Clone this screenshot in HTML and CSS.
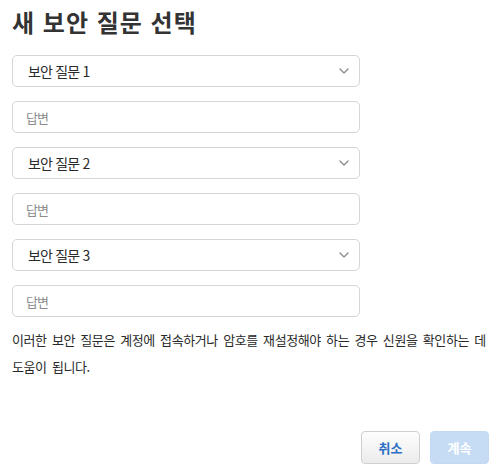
FILE: index.html
```html
<!DOCTYPE html>
<html lang="ko">
<head>
    <meta charset="UTF-8">
    <title>새 보안 질문 선택</title>
    <link rel="stylesheet" href="styles.css">
</head>
<body>
    <h1 class="title">새 보안 질문 선택</h1>

    <form class="question-form">
        <div class="select-box">
            <span>보안 질문 1</span>
            <svg class="chevron" width="10" height="6" viewBox="0 0 10 6"><path d="M1 1 L5 5 L9 1" fill="none" stroke="#8a8a8a" stroke-width="1.3" stroke-linecap="round" stroke-linejoin="round"/></svg>
        </div>
        <input class="answer" type="text" placeholder="답변">

        <div class="select-box">
            <span>보안 질문 2</span>
            <svg class="chevron" width="10" height="6" viewBox="0 0 10 6"><path d="M1 1 L5 5 L9 1" fill="none" stroke="#8a8a8a" stroke-width="1.3" stroke-linecap="round" stroke-linejoin="round"/></svg>
        </div>
        <input class="answer" type="text" placeholder="답변">

        <div class="select-box">
            <span>보안 질문 3</span>
            <svg class="chevron" width="10" height="6" viewBox="0 0 10 6"><path d="M1 1 L5 5 L9 1" fill="none" stroke="#8a8a8a" stroke-width="1.3" stroke-linecap="round" stroke-linejoin="round"/></svg>
        </div>
        <input class="answer" type="text" placeholder="답변">
    </form>

    <p class="note">이러한 보안 질문은 계정에 접속하거나 암호를 재설정해야 하는 경우 신원을 확인하는 데 도움이 됩니다.</p>

    <div class="actions">
        <button class="btn btn-cancel">취소</button>
        <button class="btn btn-next" disabled>계속</button>
    </div>
</body>
</html>
```

FILE: styles.css
```css
body {
    margin: 0;
    padding: 6px 12px 0;
    font-family: "Noto Sans CJK KR", "Noto Sans", sans-serif;
    color: #333;
    background: #fff;
}

.title {
    margin: 0 0 17px;
    font-size: 24px;
    line-height: 32px;
    font-weight: bold;
    letter-spacing: 1px;
    color: #333;
}

.question-form {
    display: flex;
    flex-direction: column;
    gap: 14px;
    width: 348px;
}

.select-box,
.answer {
    box-sizing: border-box;
    height: 32px;
    border: 1px solid #d6d6d6;
    border-radius: 5px;
    background: #fff;
}

.select-box {
    display: flex;
    align-items: center;
    justify-content: space-between;
    padding: 0 10px 0 15px;
    font-size: 14px;
    letter-spacing: -0.8px;
    color: #2a2a2a;
}

.answer {
    width: 100%;
    padding: 0 13px;
    font-family: inherit;
    font-size: 13px;
    letter-spacing: -1px;
    outline: none;
}

.answer::placeholder {
    color: #8c8c8c;
}

.note {
    margin: 9px 0 0;
    width: 484px;
    font-size: 13px;
    letter-spacing: -0.4px;
    word-spacing: 2px;
    word-break: keep-all;
    line-height: 27px;
    color: #2a2a2a;
}

.actions {
    display: flex;
    justify-content: flex-end;
    gap: 10px;
    margin-top: 51px;
    width: 477px;
}

.btn {
    box-sizing: border-box;
    width: 59px;
    height: 33px;
    border-radius: 4px;
    font-family: inherit;
    font-size: 13px;
    font-weight: bold;
}

.btn-cancel {
    border: 1px solid #cfcfcf;
    background: linear-gradient(#fdfdfd, #ececec);
    color: #2c6fc4;
}

.btn-next {
    border: 1px solid #c3d9f1;
    background: #c6dcf4;
    color: #fff;
}
```
